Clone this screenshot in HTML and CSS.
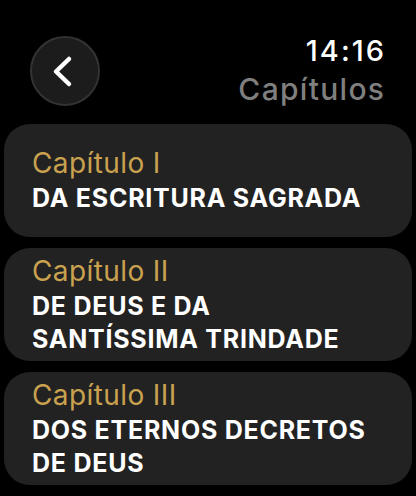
FILE: index.html
```html
<!DOCTYPE html>
<html lang="pt">
<head>
    <meta charset="UTF-8">
    <meta name="viewport" content="width=device-width, initial-scale=1.0">
    <title>Capítulos</title>
    <link rel="stylesheet" href="styles.css">
</head>
<body>

    <div class="screen">
        <div class="header">
            <button class="back-btn" aria-label="Voltar">
                <svg width="66" height="66" viewBox="0 0 66 66">
                    <path d="M37 21 L24 33.5 L37 46" fill="none" stroke="#fff" stroke-width="4.5" stroke-linecap="round" stroke-linejoin="round"/>
                </svg>
            </button>
            <div class="title-block">
                <div class="time">14:16</div>
                <div class="title">Capítulos</div>
            </div>
        </div>

        <ul class="chapter-list">
            <li class="chapter-item">
                <div class="chapter-num">Capítulo I</div>
                <div class="chapter-name">DA ESCRITURA SAGRADA</div>
            </li>
            <li class="chapter-item">
                <div class="chapter-num">Capítulo II</div>
                <div class="chapter-name">DE DEUS E DA<br>SANTÍSSIMA TRINDADE</div>
            </li>
            <li class="chapter-item">
                <div class="chapter-num">Capítulo III</div>
                <div class="chapter-name">DOS ETERNOS DECRETOS<br>DE DEUS</div>
            </li>
        </ul>
    </div>

</body>
</html>
```

FILE: styles.css
```css
body {
    margin: 0;
    background-color: #000;
    font-family: Inter, "Noto Sans", sans-serif;
    color: #fff;
}

.screen {
    width: 416px;
    height: 496px;
    overflow: hidden;
}

.header {
    display: flex;
    justify-content: space-between;
    align-items: flex-start;
    padding: 36px 32px 0 30px;
    height: 124px;
    box-sizing: border-box;
}

.back-btn {
    width: 70px;
    height: 70px;
    padding: 0;
    border-radius: 50%;
    border: 2px solid #333;
    background-color: #1c1c1c;
    display: flex;
    align-items: center;
    justify-content: center;
    box-sizing: border-box;
}

.back-btn svg {
    display: block;
    flex: none;
}

.title-block {
    text-align: right;
}

.time {
    font-size: 29px;
    line-height: 34px;
    font-weight: 500;
    letter-spacing: 2px;
    margin-right: -2px;
    margin-top: -2px;
}

.title {
    font-size: 30px;
    line-height: 34px;
    color: #7f7f7f;
    font-weight: 500;
    letter-spacing: 1.3px;
    margin-right: -1.3px;
    margin-top: 4px;
}

.chapter-list {
    list-style: none;
    margin: 0 4px;
    padding: 0;
    display: flex;
    flex-direction: column;
    gap: 11px;
}

.chapter-item {
    height: 113px;
    box-sizing: border-box;
    background-color: #222;
    border-radius: 26px;
    padding: 0 28px;
    display: flex;
    flex-direction: column;
    justify-content: center;
}

.chapter-num {
    color: #c9a14f;
    font-size: 28px;
    line-height: 34px;
    font-weight: 400;
    letter-spacing: 0.4px;
}

.chapter-name {
    font-size: 25px;
    line-height: 33px;
    font-weight: 700;
    letter-spacing: 0.75px;
    margin-top: 2px;
}
```
